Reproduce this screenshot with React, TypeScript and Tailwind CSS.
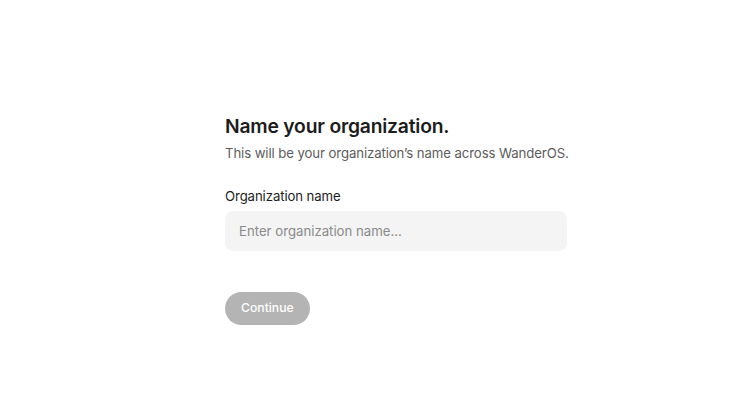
import React from "react";

const App: React.FC = () => {
  return (
    <div className="min-h-[401px] w-full bg-white font-['Inter',sans-serif] flex justify-center">
      <div className="w-[342px] ml-[49px] pt-[113px]">
        <h1 className="text-[19.3px] leading-[26px] font-semibold text-[#1c1c1c] tracking-[-0.2px]">
          Name your organization.
        </h1>
        <p className="mt-[4px] whitespace-nowrap text-[13.2px] leading-[20px] text-[#5c5c5c] tracking-[-0.1px]">
          This will be your organization’s name across WanderOS.
        </p>
        <label className="block mt-[23px] text-[13.2px] leading-[20px] text-[#1c1c1c] tracking-[-0.1px]">
          Organization name
        </label>
        <input
          className="mt-[5px] w-full h-[40px] rounded-[8px] bg-[#f4f4f4] px-[14px] text-[13.2px] text-[#1c1c1c] placeholder:text-[#8a8a8a] outline-none"
          placeholder="Enter organization name..."
        />
        <button className="mt-[41px] h-[33px] px-[16px] rounded-full bg-[#b4b4b4] text-white text-[12.2px] font-medium">
          Continue
        </button>
      </div>
    </div>
  );
};

export default App;
